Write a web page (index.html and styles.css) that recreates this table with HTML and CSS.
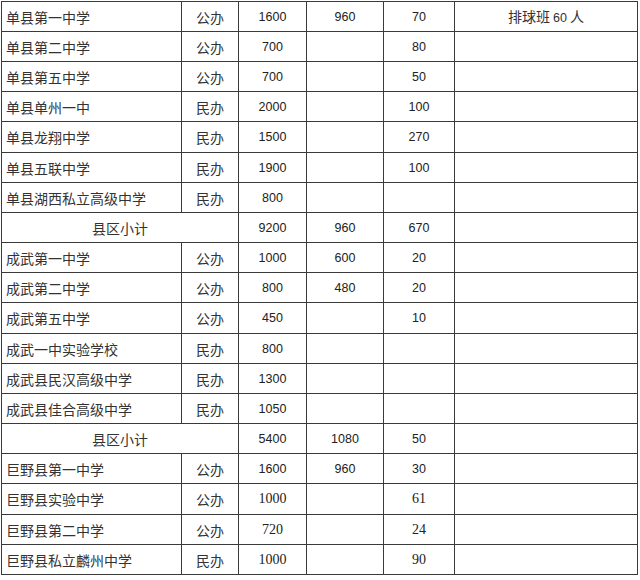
FILE: index.html
```
<!DOCTYPE html>
<html lang="zh">
<head>
<meta charset="utf-8">
<title>学校招生表</title>
<link rel="stylesheet" href="styles.css">
</head>
<body>
<table class="grid">
<colgroup>
<col class="c-name"><col class="c-type"><col class="c-num1"><col class="c-num2"><col class="c-num3"><col class="c-note">
</colgroup>
<tbody>
<tr><td class="name">单县第一中学</td><td class="type">公办</td><td class="num">1600</td><td class="num">960</td><td class="num">70</td><td class="note">排球班 <span class="d">60</span> 人</td></tr>
<tr><td class="name">单县第二中学</td><td class="type">公办</td><td class="num">700</td><td class="num"></td><td class="num">80</td><td class="note"></td></tr>
<tr><td class="name">单县第五中学</td><td class="type">公办</td><td class="num">700</td><td class="num"></td><td class="num">50</td><td class="note"></td></tr>
<tr><td class="name">单县单州一中</td><td class="type">民办</td><td class="num">2000</td><td class="num"></td><td class="num">100</td><td class="note"></td></tr>
<tr class="tall"><td class="name">单县龙翔中学</td><td class="type">民办</td><td class="num">1500</td><td class="num"></td><td class="num">270</td><td class="note"></td></tr>
<tr><td class="name">单县五联中学</td><td class="type">民办</td><td class="num">1900</td><td class="num"></td><td class="num">100</td><td class="note"></td></tr>
<tr><td class="name">单县湖西私立高级中学</td><td class="type">民办</td><td class="num">800</td><td class="num"></td><td class="num"></td><td class="note"></td></tr>
<tr><td class="sub" colspan="2">县区小计</td><td class="num">9200</td><td class="num">960</td><td class="num">670</td><td class="note"></td></tr>
<tr><td class="name">成武第一中学</td><td class="type">公办</td><td class="num">1000</td><td class="num">600</td><td class="num">20</td><td class="note"></td></tr>
<tr><td class="name">成武第二中学</td><td class="type">公办</td><td class="num">800</td><td class="num">480</td><td class="num">20</td><td class="note"></td></tr>
<tr class="tall"><td class="name">成武第五中学</td><td class="type">公办</td><td class="num">450</td><td class="num"></td><td class="num">10</td><td class="note"></td></tr>
<tr><td class="name">成武一中实验学校</td><td class="type">民办</td><td class="num">800</td><td class="num"></td><td class="num"></td><td class="note"></td></tr>
<tr><td class="name">成武县民汉高级中学</td><td class="type">民办</td><td class="num">1300</td><td class="num"></td><td class="num"></td><td class="note"></td></tr>
<tr><td class="name">成武县佳合高级中学</td><td class="type">民办</td><td class="num">1050</td><td class="num"></td><td class="num"></td><td class="note"></td></tr>
<tr><td class="sub" colspan="2">县区小计</td><td class="num">5400</td><td class="num">1080</td><td class="num">50</td><td class="note"></td></tr>
<tr><td class="name">巨野县第一中学</td><td class="type">公办</td><td class="num">1600</td><td class="num">960</td><td class="num">30</td><td class="note"></td></tr>
<tr class="serif tall"><td class="name">巨野县实验中学</td><td class="type">公办</td><td class="num">1000</td><td class="num"></td><td class="num">61</td><td class="note"></td></tr>
<tr class="serif"><td class="name">巨野县第二中学</td><td class="type">公办</td><td class="num">720</td><td class="num"></td><td class="num">24</td><td class="note"></td></tr>
<tr class="serif"><td class="name">巨野县私立麟州中学</td><td class="type">民办</td><td class="num">1000</td><td class="num"></td><td class="num">90</td><td class="note"></td></tr>
</tbody>
</table>
</body>
</html>
```
FILE: styles.css
```
html, body {
  margin: 0;
  padding: 0;
  background: #ffffff;
}
body {
  padding: 1px 0 0 1px;
  font-family: "Noto Sans CJK SC", "Liberation Sans", sans-serif;
  color: #333333;
}
.grid {
  border-collapse: collapse;
  table-layout: fixed;
  width: 636px;
}
.c-name { width: 180px; }
.c-type { width: 57px; }
.c-num1 { width: 68px; }
.c-num2 { width: 77px; }
.c-num3 { width: 71px; }
.c-note { width: 183px; }
.grid tr { height: 30px; }
.grid tr.tall { height: 31px; }
.grid td {
  border: 1px solid #3a3a3a;
  padding: 0;
  vertical-align: middle;
  white-space: nowrap;
  overflow: hidden;
  font-size: 14px;
  line-height: 16px;
}
.name {
  text-align: left;
  padding-left: 4px !important;
}
.type, .sub, .note {
  text-align: center;
}
.num {
  text-align: center;
  font-family: "Liberation Sans", Arial, sans-serif;
  font-size: 12.5px !important;
  color: #222222;
}
.note .d {
  font-family: "Liberation Sans", Arial, sans-serif;
  font-size: 12.5px;
}
.serif .num {
  font-family: "Liberation Serif", serif;
  font-size: 14px !important;
}
```
